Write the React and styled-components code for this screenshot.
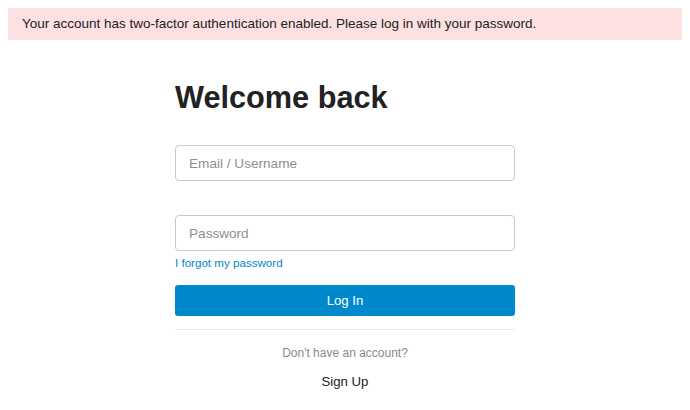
import React from "react";
import styled, { createGlobalStyle } from "styled-components";

const Global = createGlobalStyle`
  body {
    margin: 8px;
    background: #fff;
    font-family: "Liberation Sans", Arial, sans-serif;
    color: #222;
  }
  * { box-sizing: border-box; }
`;

const Alert = styled.div`
  background: #fde0e1;
  color: #222;
  font-size: 13.5px;
  line-height: 16px;
  padding: 8px 14px;
`;

const Form = styled.form`
  width: 340px;
  margin: 0 auto;
  display: flex;
  flex-direction: column;
`;

const Title = styled.h1`
  margin: 40px 0 0;
  font-size: 30.7px;
  font-weight: 700;
  color: #222;
  line-height: 35px;
`;

const Input = styled.input`
  display: block;
  width: 100%;
  height: 36px;
  margin-top: ${(p) => p.$top}px;
  padding: 0 13px;
  border: 1px solid #c9c9c9;
  border-radius: 4px;
  font-family: inherit;
  font-size: 13.6px;
  color: #222;
  background: #fff;
  outline: none;
  &::placeholder { color: #8f8f8f; }
`;

const ForgotLink = styled.a`
  margin-top: 5px;
  font-size: 11.6px;
  line-height: 13px;
  color: #0088cc;
  text-decoration: none;
  align-self: flex-start;
`;

const PrimaryButton = styled.button`
  margin-top: 16px;
  height: 31px;
  width: 100%;
  border: none;
  border-radius: 3px;
  background: #0088cc;
  color: #fff;
  font-family: inherit;
  font-size: 13.2px;
  cursor: pointer;
`;

const Divider = styled.hr`
  margin: 13px 0 0;
  border: none;
  border-top: 1px solid #e9e9e9;
  height: 0;
`;

const Hint = styled.p`
  margin: 17px 0 0;
  text-align: center;
  font-size: 12px;
  line-height: 13.4px;
  color: #8a8a8a;
`;

const SignUp = styled.button`
  margin: 14px auto 0;
  padding: 0;
  border: none;
  background: none;
  font-family: inherit;
  font-size: 13.2px;
  line-height: 15px;
  color: #222;
  cursor: pointer;
`;

export default function App() {
  return (
    <>
      <Global />
      <Alert>Your account has two-factor authentication enabled. Please log in with your password.</Alert>
      <Form onSubmit={(e) => e.preventDefault()}>
        <Title>Welcome back</Title>
        <Input $top={30} type="text" placeholder="Email / Username" />
        <Input $top={34} type="password" placeholder="Password" />
        <ForgotLink href="#">I forgot my password</ForgotLink>
        <PrimaryButton type="submit">Log In</PrimaryButton>
        <Divider />
        <Hint>Don't have an account?</Hint>
        <SignUp type="button">Sign Up</SignUp>
      </Form>
    </>
  );
}
